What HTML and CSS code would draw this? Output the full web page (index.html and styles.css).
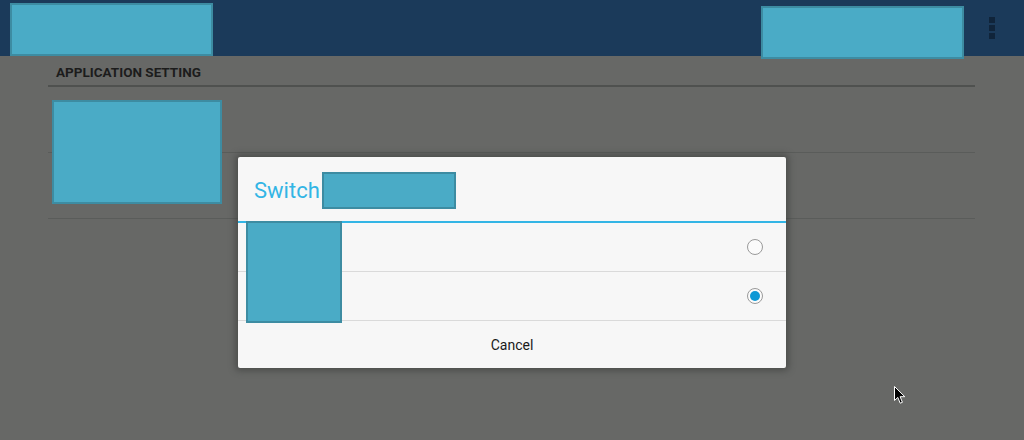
FILE: index.html
```html
<!DOCTYPE html>
<html>
<head>
<meta charset="utf-8">
<link rel="stylesheet" href="styles.css">
</head>
<body>
<header class="actionbar">
  <div class="redact redact-title"></div>
  <div class="spacer"></div>
  <div class="redact redact-actions"></div>
  <div class="overflow"><span></span><span></span><span></span></div>
</header>
<main class="content">
  <div class="section-header">APPLICATION SETTING</div>
  <div class="pref-row"></div>
  <div class="pref-row"></div>
  <div class="redact redact-prefs"></div>
</main>

<div class="dialog">
  <div class="dialog-title">
    <span class="title-text">Switch</span>
    <span class="redact redact-dtitle"></span>
  </div>
  <div class="dialog-list">
    <div class="option"><span class="radio"></span></div>
    <div class="option"><span class="radio checked"></span></div>
    <div class="redact redact-options"></div>
  </div>
  <div class="dialog-button">Cancel</div>
</div>

<svg class="cursor" width="12" height="19" viewBox="0 0 12 19">
  <path d="M0.5 0.5 L0.5 14.5 L3.8 11.4 L6.2 17.2 L8.4 16.3 L6.1 10.7 L10.8 10.7 Z" fill="#000" stroke="#fff" stroke-width="1"/>
</svg>
</body>
</html>
```

FILE: styles.css
```css
html, body {
  margin: 0;
  padding: 0;
}
body {
  width: 1024px;
  height: 440px;
  overflow: hidden;
  background: #676866;
  font-family: Roboto, "Noto Sans", sans-serif;
  position: relative;
}
.redact {
  background: #4aabc6;
  border: 2px solid #3d8ca2;
  box-sizing: border-box;
  position: absolute;
}
.actionbar {
  height: 56px;
  background: #1b3a5a;
  position: relative;
  display: flex;
  align-items: center;
}
.redact-title {
  left: 10px;
  top: 3px;
  width: 203px;
  height: 53px;
}
.redact-actions {
  left: 761px;
  top: 6px;
  width: 203px;
  height: 53px;
  z-index: 2;
}
.spacer { flex: 1; }
.overflow {
  display: flex;
  flex-direction: column;
  gap: 2px;
  margin-right: 29px;
}
.overflow span {
  width: 6px;
  height: 6px;
  background: #10243a;
}
.content {
  margin: 0 49px 0 48px;
  position: relative;
}
.section-header {
  height: 29px;
  padding: 0 0 0 8px;
  line-height: 32px;
  font-size: 13.5px;
  font-weight: bold;
  color: #1c1c1c;
  border-bottom: 2px solid #4f514f;
}
.pref-row {
  height: 65px;
  border-bottom: 1px solid #5a5c5a;
}
.redact-prefs {
  left: 4px;
  top: 44px;
  width: 170px;
  height: 104px;
}
.dialog {
  position: absolute;
  left: 238px;
  top: 157px;
  width: 548px;
  height: 211px;
  background: #f7f7f7;
  border-radius: 2px;
  box-shadow: 0 0 6px 3px rgba(60, 62, 60, 0.6);
  display: flex;
  flex-direction: column;
}
.dialog-title {
  box-sizing: border-box;
  height: 66px;
  border-bottom: 2px solid #33b5e5;
  display: flex;
  align-items: center;
  padding-left: 16px;
  position: relative;
}
.title-text {
  font-size: 22px;
  color: #33b5e5;
  margin-top: 2px;
}
.redact-dtitle {
  left: 84px;
  top: 15px;
  width: 134px;
  height: 37px;
}
.dialog-list {
  position: relative;
}
.option {
  height: 48px;
  border-bottom: 1px solid #dadada;
  display: flex;
  align-items: center;
  justify-content: flex-end;
  padding-right: 23px;
}
.radio {
  width: 14px;
  height: 14px;
  border: 1.5px solid #9a9a9a;
  border-radius: 50%;
  background: #fbfbfb;
  position: relative;
}
.radio.checked::after {
  content: "";
  position: absolute;
  left: 2px;
  top: 2px;
  width: 10px;
  height: 10px;
  border-radius: 50%;
  background: #0e98d5;
}
.redact-options {
  left: 8px;
  top: -2px;
  width: 96px;
  height: 102px;
}
.dialog-button {
  flex: 1;
  display: flex;
  align-items: center;
  justify-content: center;
  font-size: 14px;
  color: #1a1a1a;
}
.cursor {
  position: absolute;
  left: 894px;
  top: 386px;
}
```
